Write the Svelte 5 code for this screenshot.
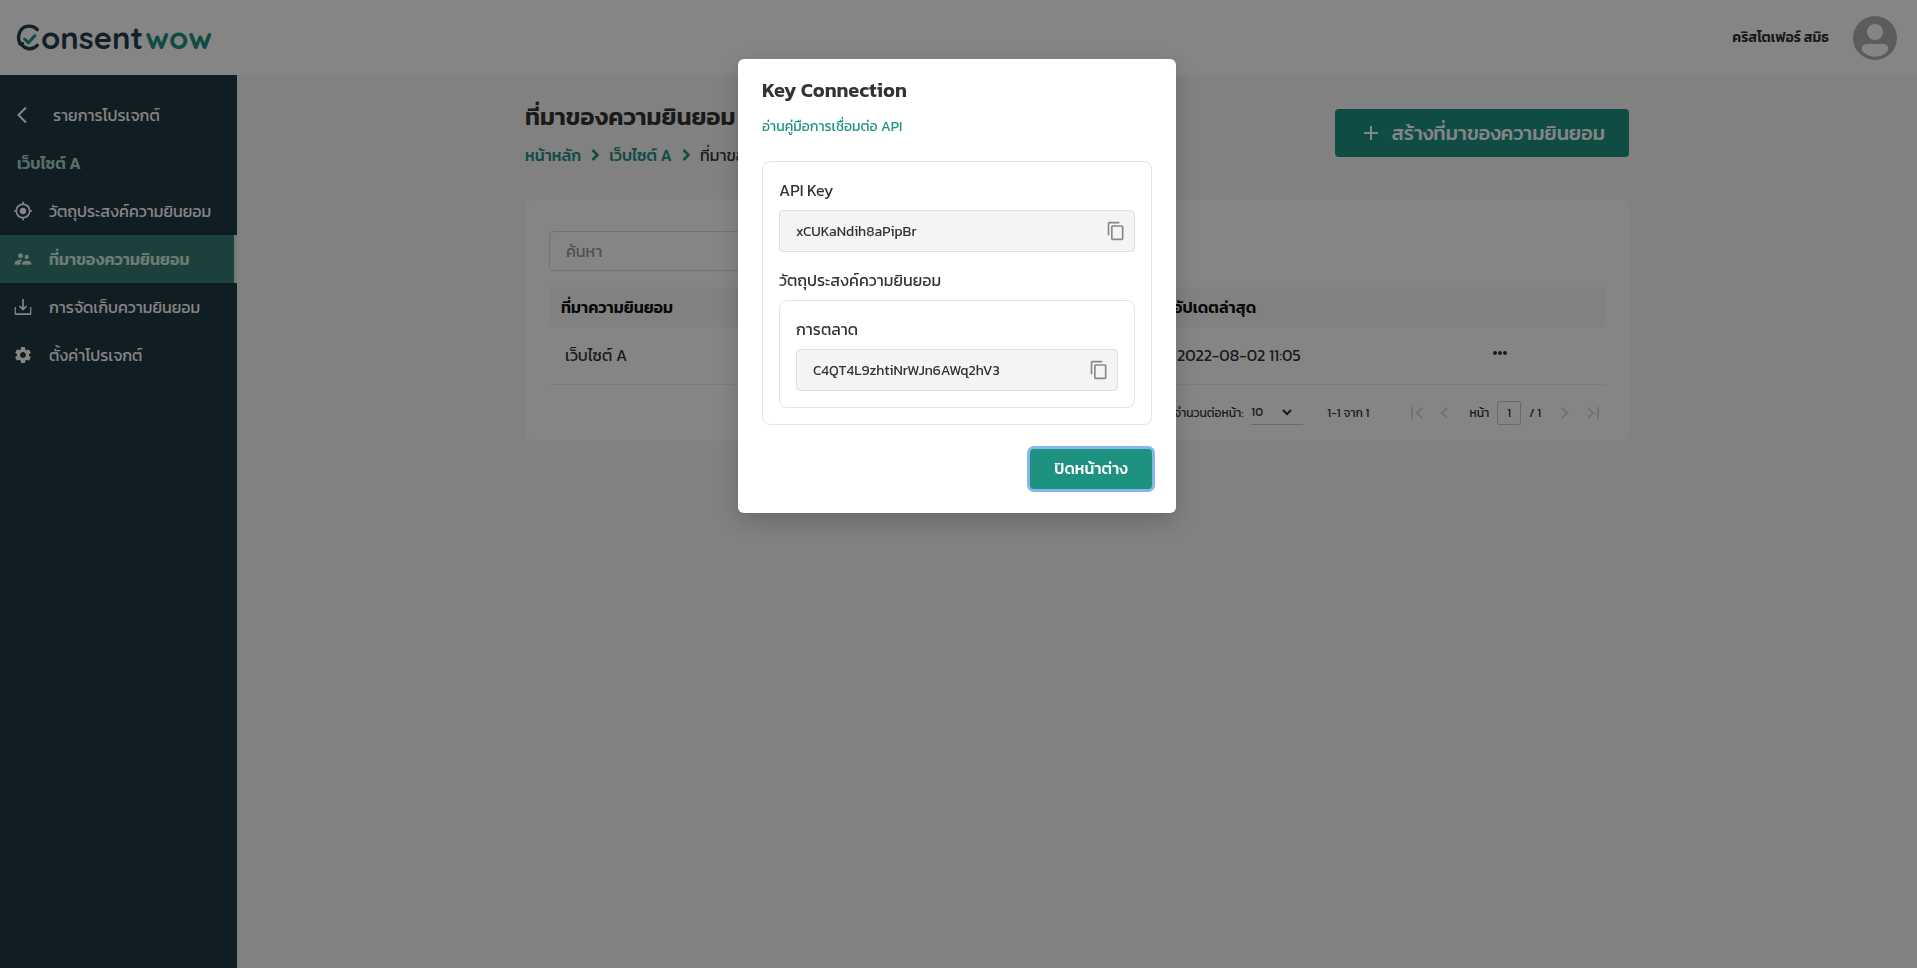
<script>
  const icons = {
    target: 'M12 8c-2.21 0-4 1.79-4 4s1.79 4 4 4 4-1.79 4-4-1.79-4-4-4zm8.94 3A8.994 8.994 0 0 0 13 3.06V1h-2v2.06A8.994 8.994 0 0 0 3.06 11H1v2h2.06A8.994 8.994 0 0 0 11 20.94V23h2v-2.06A8.994 8.994 0 0 0 20.94 13H23v-2h-2.06zM12 19c-3.87 0-7-3.13-7-7s3.13-7 7-7 7 3.13 7 7-3.13 7-7 7z',
    people: 'M16.5 12c1.38 0 2.49-1.12 2.49-2.5S17.88 7 16.5 7C15.12 7 14 8.12 14 9.5s1.12 2.5 2.5 2.5zM9 11c1.66 0 2.99-1.34 2.99-3S10.66 5 9 5C7.34 5 6 6.34 6 8s1.34 3 3 3zm7.5 3c-1.83 0-5.5.92-5.5 2.75V19h11v-2.25c0-1.83-3.67-2.75-5.5-2.75zM9 13c-2.33 0-7 1.17-7 3.5V19h7v-2.25c0-.85.33-2.34 2.37-3.47C10.5 13.1 9.66 13 9 13z',
    save: 'M20.5 12v7.5h-17V12H2v8c0 .9.7 1.5 1.5 1.5h17c.8 0 1.5-.6 1.5-1.5v-8h-1.5zM13 12.67l2.59-2.58L17 11.5l-5 5-5-5 1.41-1.41L11 12.67V2.5h2z',
    gear: 'M19.14 12.94c.04-.3.06-.61.06-.94 0-.32-.02-.64-.07-.94l2.03-1.58a.49.49 0 0 0 .12-.61l-1.92-3.32a.488.488 0 0 0-.59-.22l-2.39.96c-.5-.38-1.03-.7-1.62-.94l-.36-2.54a.484.484 0 0 0-.48-.41h-3.84c-.24 0-.43.17-.47.41l-.36 2.54c-.59.24-1.13.57-1.62.94l-2.39-.96c-.22-.08-.47 0-.59.22L2.74 8.87c-.12.21-.08.47.12.61l2.03 1.58c-.05.3-.09.63-.09.94s.02.64.07.94l-2.03 1.58a.49.49 0 0 0-.12.61l1.92 3.32c.12.22.37.29.59.22l2.39-.96c.5.38 1.03.7 1.62.94l.36 2.54c.05.24.24.41.48.41h3.84c.24 0 .44-.17.47-.41l.36-2.54c.59-.24 1.13-.56 1.62-.94l2.39.96c.22.08.47 0 .59-.22l1.92-3.32c.12-.22.07-.47-.12-.61l-2.01-1.58zM12 15.6c-1.98 0-3.6-1.62-3.6-3.6s1.62-3.6 3.6-3.6 3.6 1.62 3.6 3.6-1.62 3.6-3.6 3.6z',
    copy: 'M16 1H4c-1.1 0-2 .9-2 2v14h2V3h12V1zm3 4H8c-1.1 0-2 .9-2 2v14c0 1.1.9 2 2 2h11c1.1 0 2-.9 2-2V7c0-1.1-.9-2-2-2zm0 16H8V7h11v14z'
  };

  const nav = [
    { icon: 'target', label: 'วัตถุประสงค์ความยินยอม' },
    { icon: 'people', label: 'ที่มาของความยินยอม', active: true },
    { icon: 'save', label: 'การจัดเก็บความยินยอม' },
    { icon: 'gear', label: 'ตั้งค่าโปรเจกต์' }
  ];

  const rows = [{ name: 'เว็บไซต์ A', updated: '2022-08-02 11:05' }];
</script>

{#snippet icon(name)}
  <svg class="icon" viewBox="0 0 24 24" aria-hidden="true"><path d={icons[name]} /></svg>
{/snippet}

{#snippet keyField(id, label, value)}
  <label for={id}>{label}</label>
  <div class="field">
    <input {id} type="text" readonly {value} />
    <button class="copy" type="button" aria-label="Copy">{@render icon('copy')}</button>
  </div>
{/snippet}

<div class="page">
  <header class="topbar">
    <a class="logo" href="#home">
      <svg viewBox="0 0 25 28" aria-hidden="true">
        <path d="M21.3 5.6C17 .9 9 1.200 5.300 5.500 1.800 9.800 1.800 16 4.200 20" />
        <path d="M4 19.500l2.500 .3M6.200 21.300C10 26 17.500 26 21.300 21.300" />
        <path class="tick" d="M8.500 15l3.800 3.800L19 11.500" />
      </svg>
      <span class="consent">onsent</span><span class="wow">wow</span>
    </a>
    <div class="user">
      <span>คริสโตเฟอร์ สมิธ</span>
      <svg viewBox="0 0 44 44" aria-hidden="true">
        <circle cx="22" cy="22" r="22" fill="#b0b0b0" />
        <circle cx="22" cy="16" r="8" fill="#fff" />
        <path class="shoulders" d="M14 28h16c4 0 6 3 5 6-2 4-7 6.500-13 6.500S11 38 9 34c-1-3 1-6 5-6z" />
      </svg>
    </div>
  </header>

  <div class="body">
    <nav class="sidebar">
      <a class="back" href="#projects">
        <svg viewBox="0 0 12 18" aria-hidden="true"><path d="M10 1.500L2.500 9l7.500 7.500" /></svg>
        <span>รายการโปรเจกต์</span>
      </a>
      <div class="project">เว็บไซต์ A</div>
      {#each nav as item}
        <a class="item" class:active={item.active} href="#{item.icon}">
          {@render icon(item.icon)}
          <span>{item.label}</span>
        </a>
      {/each}
    </nav>

    <main>
      <div class="content">
        <div class="heading">
          <div>
            <h1>ที่มาของความยินยอม</h1>
            <div class="crumbs">
              <a href="#home">หน้าหลัก</a>
              <svg viewBox="0 0 8 12" aria-hidden="true"><path d="M1.500 1l5 5-5 5" /></svg>
              <a href="#site">เว็บไซต์ A</a>
              <svg viewBox="0 0 8 12" aria-hidden="true"><path d="M1.500 1l5 5-5 5" /></svg>
              <span>ที่มาของความยินยอม</span>
            </div>
          </div>
          <button class="create" type="button">
            <svg viewBox="0 0 14 14" aria-hidden="true"><path d="M7 0v14M0 7h14" /></svg>
            สร้างที่มาของความยินยอม
          </button>
        </div>

        <section class="card">
          <input class="search" type="search" placeholder="ค้นหา" aria-label="ค้นหา" />
          <table>
            <thead>
              <tr><th class="name">ที่มาความยินยอม</th><th>อัปเดตล่าสุด</th><th class="menu"></th></tr>
            </thead>
            <tbody>
              {#each rows as row}
                <tr>
                  <td>{row.name}</td>
                  <td>{row.updated}</td>
                  <td class="menu">
                    <button class="more" type="button" aria-label="Menu">
                      <svg viewBox="0 0 14 4" aria-hidden="true">
                        <circle cx="2" cy="2" r="2" /><circle cx="7" cy="2" r="2" /><circle cx="12" cy="2" r="2" />
                      </svg>
                    </button>
                  </td>
                </tr>
              {/each}
            </tbody>
          </table>
          <div class="pager">
            <label for="size">จำนวนต่อหน้า:</label>
            <div class="size">
              <select id="size"><option>10</option></select>
              <svg viewBox="0 0 10 7" aria-hidden="true"><path d="M1 1l4 4 4-4" /></svg>
            </div>
            <span class="range">1-1 จาก 1</span>
            <button class="step first" type="button" disabled aria-label="First">
              <svg viewBox="0 0 12 12"><path d="M1 0v12M11 1L6 6l5 5" /></svg>
            </button>
            <button class="step" type="button" disabled aria-label="Previous">
              <svg viewBox="0 0 12 12"><path d="M9 1L4 6l5 5" /></svg>
            </button>
            <label class="pagelabel" for="page">หน้า</label>
            <input id="page" type="text" value="1" />
            <span class="total">/ 1</span>
            <button class="step next" type="button" disabled aria-label="Next">
              <svg viewBox="0 0 12 12"><path d="M3 1l5 5-5 5" /></svg>
            </button>
            <button class="step" type="button" disabled aria-label="Last">
              <svg viewBox="0 0 12 12"><path d="M11 0v12M1 1l5 5-5 5" /></svg>
            </button>
          </div>
        </section>
      </div>
    </main>
  </div>
</div>

<div class="backdrop">
  <div class="dialog" role="dialog" aria-modal="true" aria-labelledby="dialog-title">
    <h2 id="dialog-title">Key Connection</h2>
    <a class="guide" href="#guide">อ่านคู่มือการเชื่อมต่อ API</a>
    <div class="box">
      {@render keyField('api-key', 'API Key', 'xCUKaNdih8aPipBr')}
      <div class="group">วัตถุประสงค์ความยินยอม</div>
      <div class="box inner">
        {@render keyField('marketing', 'การตลาด', 'C4QT4L9zhtiNrWJn6AWq2hV3')}
      </div>
    </div>
    <button class="close" type="button">ปิดหน้าต่าง</button>
  </div>
</div>

<style>
  :global(body) {
    margin: 0;
    font-family: Kanit, Prompt, 'Noto Sans Thai', 'Noto Sans', sans-serif;
    font-size: 16px;
    line-height: 24px;
    color: #333;
  }
  *, *::before, *::after { box-sizing: border-box; }
  button, input, select { font: inherit; color: inherit; margin: 0; }
  button { border: 0; background: none; padding: 0; }
  a { text-decoration: none; color: inherit; }
  svg { display: block; flex: none; }
  svg path { fill: none; stroke: currentColor; stroke-width: 2; }
  .icon { width: 20px; height: 20px; }
  .icon path { fill: currentColor; stroke: none; }

  .page { min-height: 100vh; display: flex; flex-direction: column; }
  .topbar {
    height: 75px;
    padding: 0 20px 0 16px;
    display: flex;
    align-items: center;
    justify-content: space-between;
    background: #fff;
  }
  .logo { display: flex; align-items: center; font-family: Quicksand, Lato, sans-serif; line-height: 40px; color: #233e4b; }
  .logo svg { width: 25px; height: 28px; }
  .logo path { stroke-width: 3.4; stroke-linecap: round; stroke-linejoin: round; }
  .logo .tick { stroke: #1d9280; stroke-width: 3; }
  .consent { font-size: 31px; font-weight: 700; }
  .wow { font-size: 31px; font-weight: 800; color: #1d9280; margin-left: 2px; }
  .user { display: flex; align-items: center; gap: 24px; font-size: 14px; font-weight: 600; }
  .user svg { width: 44px; height: 44px; }
  .shoulders { fill: #fff; stroke: none; }

  .body { flex: 1; display: flex; }
  .sidebar { width: 237px; flex: none; padding-top: 16px; background: #1f3841; color: #fff; }
  .back, .project, .item { display: flex; align-items: center; height: 48px; white-space: nowrap; }
  .back { padding-left: 16px; gap: 25px; }
  .back svg { width: 12px; height: 18px; }
  .project { padding-left: 17px; font-weight: 600; color: #a9d4c7; }
  .item { padding-left: 13px; gap: 16px; }
  .item.active { background: #367b73; border-right: 3px solid #d5ece4; color: #d5ece4; font-weight: 600; }

  main { flex: 1; min-width: 0; padding: 24px; background: #f7f7f7; }
  .content { max-width: 1104px; margin: 0 auto; }
  .heading { display: flex; justify-content: space-between; align-items: flex-start; }
  h1 { margin: 0; font-size: 24px; line-height: 36px; font-weight: 600; }
  .crumbs { display: flex; align-items: center; gap: 10px; margin-top: 8px; }
  .crumbs svg { width: 8px; height: 12px; color: #1d9280; }
  .crumbs path { stroke-width: 2.5; }
  .crumbs a { color: #1d9280; font-weight: 500; }
  .create {
    display: flex; align-items: center; gap: 13px;
    height: 48px; margin-top: 10px; padding: 0 24px 0 29px;
    border-radius: 4px; background: #1d9280; color: #fff;
    font-size: 20px; font-weight: 500;
  }
  .create svg { width: 14px; height: 14px; }

  .card { margin-top: 32px; padding: 32px 24px 0; background: #fff; border-radius: 8px; }
  .search {
    display: block; width: 320px; height: 40px; padding: 0 16px;
    border: 1px solid #ddd; border-radius: 4px; background: none;
  }
  .search::placeholder { color: #999; opacity: 1; }
  table { width: 100%; margin-top: 16px; border-collapse: collapse; table-layout: fixed; }
  th { height: 40px; padding: 0 12px; text-align: left; font-weight: 600; color: #111; background: #f7f7f7; }
  td { height: 57px; padding: 0 16px; border-bottom: 1px solid #eee; }
  .name { width: 612px; }
  .menu { width: 210px; padding: 0 0 4px; text-align: center; }
  .more { display: block; margin: 0 auto; }
  .more svg { width: 14px; height: 4px; }
  .more circle { fill: #333; }
  .pager { display: flex; align-items: center; justify-content: flex-end; height: 56px; font-size: 12px; padding-right: 6px; }
  .size { display: flex; align-items: center; width: 52px; height: 24px; margin-left: 8px; border-bottom: 1px solid #ccc; }
  .size select { appearance: none; width: 31px; border: 0; padding: 0; background: none; }
  .size svg { width: 10px; height: 7px; }
  .range { margin: 0 42px 0 24px; }
  .step { color: #ddd; }
  .step svg { width: 12px; height: 12px; }
  .first { margin-right: 15px; }
  .pagelabel { margin-left: 19px; }
  #page { width: 24px; height: 24px; margin: 0 8px; padding: 0; text-align: center; border: 1px solid #ccc; border-radius: 2px; background: none; }
  .next { margin: 0 16px 0 18px; }

  .backdrop {
    position: fixed; inset: 0; padding: 59px 24px 24px 21px;
    display: flex; justify-content: center; align-items: flex-start;
    background: rgba(0, 0, 0, 0.48);
  }
  .dialog {
    display: flex; flex-direction: column;
    width: 438px; max-width: 100%; padding: 15px 24px 24px;
    background: #fff; border-radius: 6px;
    box-shadow: 0 8px 24px rgba(0, 0, 0, 0.2);
  }
  h2 { margin: 0; font-size: 20px; line-height: 32px; font-weight: 600; }
  .guide { margin-top: 9px; font-size: 14px; line-height: 24px; color: #1d9280; }
  .box { margin-top: 22px; padding: 16px; border: 1px solid #e4e4e4; border-radius: 8px; }
  .box label, .group { display: block; line-height: 24px; }
  .field {
    display: flex; align-items: center;
    height: 42px; margin-top: 8px; padding: 0 8px 0 16px;
    background: #f4f4f4; border: 1px solid #e0e0e0; border-radius: 4px;
  }
  .field input { flex: 1; min-width: 0; border: 0; padding: 2px 0 0; background: none; outline: 0; font-size: 14px; }
  .copy { color: #888; }
  .group { margin-top: 16px; }
  .inner { margin-top: 8px; }
  .close {
    align-self: flex-end; min-width: 122px; height: 40px; margin-top: 24px; padding: 0 24px 2px;
    border-radius: 4px; background: #1d9280; color: #fff; font-weight: 500;
    box-shadow: 0 0 0 3px #86b7ec;
  }
</style>
